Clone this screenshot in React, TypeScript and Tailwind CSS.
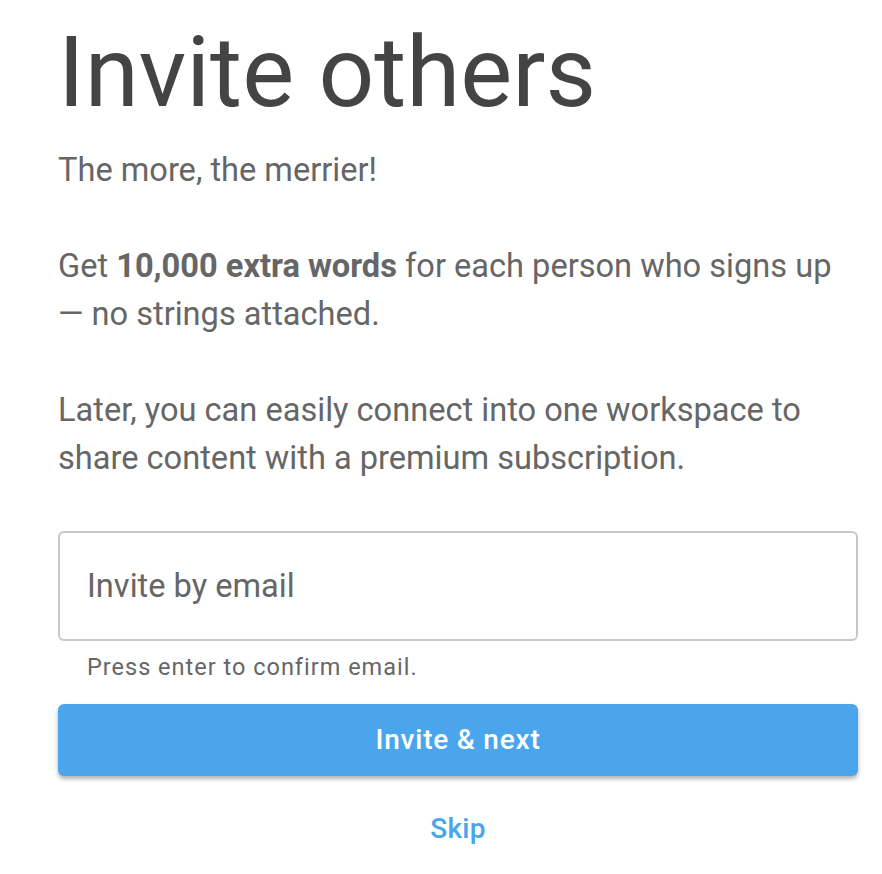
export default function App() {
  return (
    <div className="min-h-screen bg-white font-['Roboto',sans-serif]">
      <div className="w-[800px] ml-[58px] pt-[14px]">
        <h1 className="text-[98px] leading-[118px] font-normal text-[#444444]">Invite others</h1>
        <div className="mt-[14px] text-[32.6px] leading-[48px] text-[#666666]">
          <p>The more, the merrier!</p>
          <p className="mt-[48px]">
            Get <b className="font-bold">10,000 extra words</b> for each person who signs up — no strings attached.
          </p>
          <p className="mt-[48px]">
            Later, you can easily connect into one workspace to share content with a premium subscription.
          </p>
        </div>
        <div className="mt-[49px]">
          <input
            type="email"
            placeholder="Invite by email"
            className="w-full h-[110px] rounded-[6px] border-2 border-[#c8c8c8] px-[27px] text-[32.6px] text-[#444444] placeholder:text-[#666666] outline-none"
          />
          <p className="ml-[29px] mt-[12px] text-[23.5px] leading-[28px] tracking-[1px] text-[#666666]">
            Press enter to confirm email.
          </p>
        </div>
        <button className="mt-[23px] w-full h-[72px] rounded-[6px] bg-[#4ba5ec] text-white text-[28px] font-medium tracking-[0.8px] shadow-[0_3px_4px_rgba(0,0,0,0.3)]">
          Invite &amp; next
        </button>
        <div className="mt-[32px] flex justify-center">
          <button className="text-[28px] leading-[42px] font-medium text-[#4ba5ec] tracking-[0.3px]">Skip</button>
        </div>
      </div>
    </div>
  );
}
